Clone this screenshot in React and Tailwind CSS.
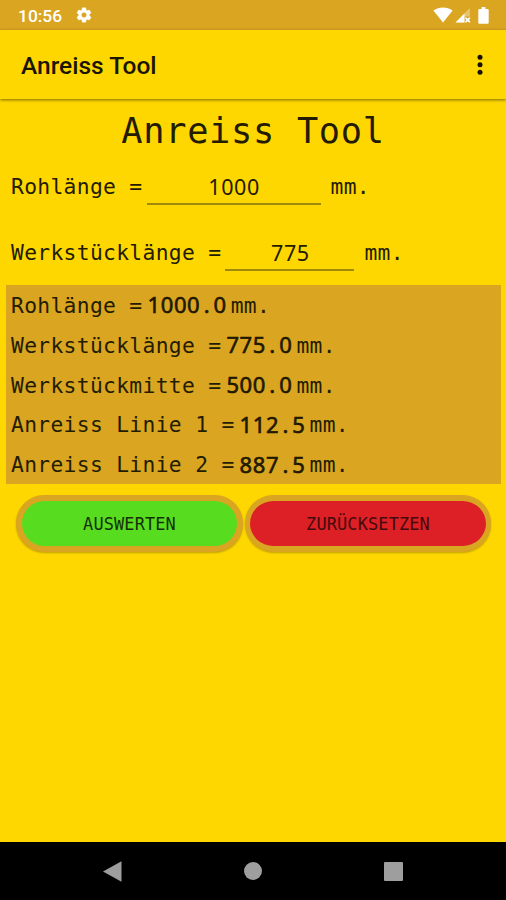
import React from "react";

const results = [
  { label: "Rohlänge =", value: "1000.0" },
  { label: "Werkstücklänge =", value: "775.0" },
  { label: "Werkstückmitte =", value: "500.0" },
  { label: "Anreiss Linie 1 =", value: "112.5" },
  { label: "Anreiss Linie 2 =", value: "887.5" },
];

function Label({ children, className = "" }) {
  return (
    <span className={"whitespace-pre tracking-[0.33px] " + className}>{children}</span>
  );
}

function Value({ children, bold = false }) {
  const [whole, fraction] = children.split(".");
  return (
    <span
      className={
        "flex font-['Noto_Sans'] tracking-[0.6px] " +
        (bold
          ? "text-[22px] font-normal [-webkit-text-stroke:0.6px_#1a1300]"
          : "pl-px pt-px text-[21.5px] font-normal")
      }
    >
      <span>{whole}</span>
      {fraction && <span className="w-[13.2px] text-center">.</span>}
      {fraction && <span>{fraction}</span>}
    </span>
  );
}

function StatusBar() {
  return (
    <div className="flex h-[30px] items-center bg-[#daa520] pl-[18px] pr-[17px] text-white">
      <span className="w-[44px] pt-[2px] font-['Roboto'] text-[17.4px] font-medium leading-[30px]">
        10:56
      </span>
      <svg className="ml-[13px] h-[18px] w-[18px]" viewBox="0 0 24 24" fill="currentColor" stroke="currentColor" strokeWidth="0.6">
        <path d="M19.14 12.94c.04-.3.06-.61.06-.94 0-.32-.02-.64-.07-.94l2.03-1.58c.18-.14.23-.41.12-.61l-1.92-3.32c-.12-.22-.37-.29-.59-.22l-2.39.96c-.5-.38-1.03-.7-1.62-.94l-.36-2.54c-.04-.24-.24-.41-.48-.41h-3.84c-.24 0-.43.17-.47.41l-.36 2.54c-.59.24-1.13.57-1.62.94l-2.39-.96c-.22-.08-.47 0-.59.22L2.74 8.87c-.12.21-.08.47.12.61l2.03 1.58c-.05.3-.09.63-.09.94s.02.64.07.94l-2.03 1.58c-.18.14-.23.41-.12.61l1.92 3.32c.12.22.37.29.59.22l2.39-.96c.5.38 1.03.7 1.62.94l.36 2.54c.05.24.24.41.48.41h3.84c.24 0 .44-.17.47-.41l.36-2.54c.59-.24 1.13-.56 1.62-.94l2.39.96c.22.08.47 0 .59-.22l1.92-3.32c.12-.22.07-.47-.12-.61l-2.01-1.58zM12 15.6c-1.98 0-3.6-1.62-3.6-3.6s1.62-3.6 3.6-3.6 3.6 1.62 3.6 3.6-1.62 3.6-3.6 3.6z" />
      </svg>
      <svg className="ml-auto h-[16px] w-[20px]" viewBox="0 0 20 16" fill="currentColor">
        <path d="M.4 3.6C5.8-.4 14.2-.4 19.6 3.6L10 15.4z" />
      </svg>
      <svg className="ml-[2px] h-[16px] w-[16px]" viewBox="0 0 16 16" fill="currentColor">
        <path d="M.5 15.5 14.8 1v8.5H9.5v6z" opacity="0.35" />
        <path d="M.5 15.5 9.5 6.5v9z" />
        <path d="M10.2 10.5h1.2l1.3 1.3 1.3-1.3h1.2v1.2L13.9 13l1.3 1.3v1.2H14l-1.3-1.3-1.3 1.3h-1.2v-1.2l1.3-1.3-1.3-1.3z" />
      </svg>
      <svg className="ml-[7px] h-[17px] w-[11px]" viewBox="0 0 11 17" fill="currentColor">
        <path d="M3.6 0h3.8v2h2.3q1 0 1 1v12.8q0 1-1 1H1.3q-1 0-1-1V3q0-1 1-1h2.3z" />
      </svg>
    </div>
  );
}

function AppBar() {
  return (
    <div className="flex h-[69px] items-center justify-between bg-[#ffd700] pl-[21px] pr-[23px] shadow-[0_1px_3px_rgba(0,0,0,0.5)]">
      <span className="pt-[4px] font-['Roboto'] text-[24.5px] font-medium leading-none text-[#1a1500]">
        Anreiss Tool
      </span>
      <svg className="h-[22px] w-[6px]" viewBox="0 0 6 22" fill="#151000">
        <circle cx="3" cy="3.3" r="2.5" />
        <circle cx="3" cy="10.8" r="2.5" />
        <circle cx="3" cy="18.3" r="2.5" />
      </svg>
    </div>
  );
}

function InputRow({ label, value, width }) {
  return (
    <div className="flex h-[40px] items-start leading-[34px]">
      <Label className="pt-px">{label}</Label>
      <div
        className={
          "ml-[4px] flex h-[36px] justify-center border-b-2 border-[#a08a0c] " + width
        }
      >
        <Value>{value}</Value>
      </div>
      <Label className="ml-[10px] pt-px">mm.</Label>
    </div>
  );
}

function ActionButton({ children, className }) {
  return (
    <button
      className={
        "h-[57px] rounded-full border-[#daa520] pt-[2px] text-[16.9px] leading-none tracking-[0.15px] shadow-[0_1px_2px_rgba(0,0,0,0.25)] " +
        className
      }
    >
      {children}
    </button>
  );
}

export default function App() {
  return (
    <div className="flex h-[900px] w-[506px] flex-col overflow-hidden bg-[#ffd700] font-['DejaVu_Sans_Mono',monospace] text-[21.3px] text-[#231c02]">
      <StatusBar />
      <AppBar />
      <main className="flex flex-1 flex-col">
        <h1 className="mt-[9px] text-center text-[35.3px] leading-[46px] tracking-[0.7px]">
          Anreiss Tool
        </h1>
        <div className="mt-[15px] flex flex-col gap-[26px] pl-[11px]">
          <InputRow label="Rohlänge =" value="1000" width="w-[174px]" />
          <InputRow label="Werkstücklänge =" value="775" width="w-[129px]" />
        </div>
        <div className="ml-[6px] mr-[5px] mt-[10px] flex h-[199px] flex-col bg-[#daa520] pl-[5px]">
          {results.map((r) => (
            <div key={r.label} className="flex h-[39.8px] items-center">
              <Label className="pt-[2px]">{r.label}</Label>
              <div className="ml-[5px]">
                <Value bold>{r.value}</Value>
              </div>
              <Label className="ml-[4px] pt-[2px]">mm.</Label>
            </div>
          ))}
        </div>
        <div className="ml-[16px] mt-[11px] flex gap-[2px]">
          <ActionButton className="w-[227px] border-[6px] bg-[#58dc20] text-[#143008]">
            AUSWERTEN
          </ActionButton>
          <ActionButton className="w-[246px] border-x-[5px] border-y-[6px] bg-[#dc2026] text-[#450a0c]">
            ZURÜCKSETZEN
          </ActionButton>
        </div>
      </main>
      <nav className="flex h-[58px] items-center justify-between bg-black pl-[103px] pr-[103px]">
        <svg className="h-[21px] w-[19px]" viewBox="0 0 19 21" fill="#9e9e9e">
          <path d="M0 10.5 18.5.3v20.4z" />
        </svg>
        <div className="h-[18px] w-[18px] rounded-full bg-[#9e9e9e]" />
        <div className="h-[19px] w-[19px] rounded-[1px] bg-[#9e9e9e]" />
      </nav>
    </div>
  );
}
